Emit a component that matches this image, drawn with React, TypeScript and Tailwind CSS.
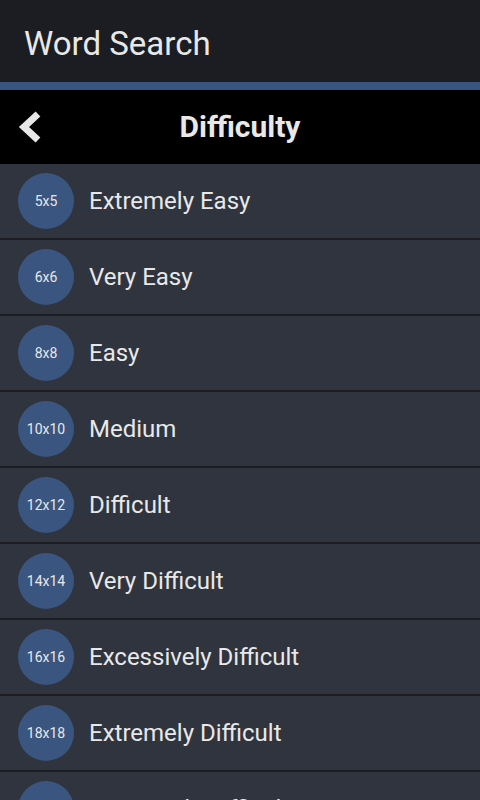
const levels = [
  { size: "5x5", label: "Extremely Easy" },
  { size: "6x6", label: "Very Easy" },
  { size: "8x8", label: "Easy" },
  { size: "10x10", label: "Medium" },
  { size: "12x12", label: "Difficult" },
  { size: "14x14", label: "Very Difficult" },
  { size: "16x16", label: "Excessively Difficult" },
  { size: "18x18", label: "Extremely Difficult" },
  { size: "20x20", label: "Supremely Difficult" },
];

export default function App() {
  return (
    <div className="w-[480px] h-[800px] overflow-hidden bg-[#2f343e] font-['Roboto',sans-serif] text-[#e8e8e8]">
      <div className="h-[82px] bg-[#1b1d22] flex items-center px-6 pt-1">
        <h1 className="text-[33px] leading-none">Word Search</h1>
      </div>
      <div className="h-2 bg-[#3a5580]" />
      <div className="h-[74px] bg-black relative flex items-center justify-center">
        <button className="absolute left-[16px] top-[21px] w-8 h-8">
          <svg width="28" height="32" viewBox="0 0 28 32">
            <polyline points="22,3 8,16 22,29" fill="none" stroke="#e8e8e8" strokeWidth="7" strokeLinejoin="miter" strokeLinecap="butt" />
          </svg>
        </button>
        <h2 className="text-[30px] font-bold leading-none">Difficulty</h2>
      </div>
      <ul>
        {levels.map((l) => (
          <li key={l.size} className="h-[76px] border-b-2 border-[#1b1d22] flex items-center pl-[18px]">
            <div className="w-14 h-14 shrink-0 rounded-full bg-[#3a5580] flex items-center justify-center text-[14px] text-[#e8e8e8]">
              {l.size}
            </div>
            <span className="ml-[15px] text-[24px] leading-none">{l.label}</span>
          </li>
        ))}
      </ul>
    </div>
  );
}
